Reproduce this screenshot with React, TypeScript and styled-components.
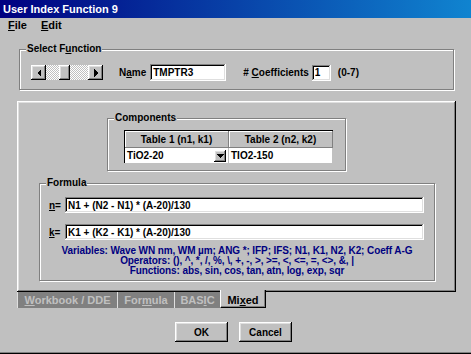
import React from 'react';
import styled, { createGlobalStyle } from 'styled-components';

const GlobalStyle = createGlobalStyle`
  html, body {
    margin: 0;
    padding: 0;
    background: #c0c0c0;
  }
  body {
    font-family: "Liberation Sans", Arial, sans-serif;
  }
`;

const raised = `
  background: #c0c0c0;
  box-shadow: inset -1px -1px #000, inset 1px 1px #fff, inset -2px -2px #808080, inset 2px 2px #dfdfdf;
`;

const sunken = `
  background: #fff;
  box-shadow: inset -1px -1px #fff, inset 1px 1px #808080, inset -2px -2px #dfdfdf, inset 2px 2px #000;
`;

const Window = styled.div`
  width: 471px;
  height: 354px;
  box-sizing: border-box;
  display: flex;
  flex-direction: column;
  background: #c0c0c0;
  border-bottom: 1px solid #000;
  box-shadow: inset 0 -1px #808080;
  overflow: hidden;
  font-family: "Liberation Sans", Arial, sans-serif;
  font-weight: bold;
  font-size: 10px;
  color: #000;
`;

const TitleBar = styled.div`
  height: 18px;
  line-height: 18px;
  padding-left: 3px;
  font-size: 11px;
  color: #fff;
  background: linear-gradient(to right, #000080, #1084d0);
`;

const MenuBar = styled.div`
  display: flex;
  gap: 14px;
  height: 14px;
  line-height: 14px;
  padding-left: 8px;
  font-size: 11px;
`;

const Body = styled.div`
  flex: 1;
  display: flex;
  flex-direction: column;
  align-items: flex-start;
  padding: 0 15px 0 17px;
`;

const GroupBox = styled.div`
  position: relative;
  box-sizing: border-box;
  border: 1px solid #808080;
  box-shadow: inset 1px 1px #fff, 1px 1px #fff;
`;

const Legend = styled.span`
  position: absolute;
  top: -7px;
  left: 6px;
  padding: 0 1px;
  line-height: 12px;
  background: #c0c0c0;
`;

const SelectGroup = styled(GroupBox)`
  width: 435px;
  height: 41px;
  margin: 17px 0 0 2px;
  padding: 14px 0 0 11px;
`;

const Row = styled.div`
  display: flex;
  align-items: center;
  height: 17px;
`;

const ScrollBar = styled.div`
  display: flex;
  width: 72px;
  height: 15px;
  background: repeating-conic-gradient(#fff 0 25%, #c0c0c0 0 50%) 0 0 / 2px 2px;
`;

const ScrollButton = styled.div<{ $end?: boolean }>`
  width: 15px;
  height: 15px;
  display: flex;
  align-items: center;
  justify-content: center;
  margin-left: ${p => (p.$end ? 'auto' : '0')};
  ${raised}
`;

const Thumb = styled.div`
  width: 11px;
  height: 15px;
  margin-left: 13px;
  ${raised}
`;

const Label = styled.span<{ $ml: number }>`
  margin-left: ${p => p.$ml}px;
  white-space: nowrap;
`;

const Field = styled.input<{ $w: number; $h?: number; $ml?: number }>`
  box-sizing: border-box;
  width: ${p => p.$w}px;
  height: ${p => p.$h ?? 17}px;
  margin: 0 0 0 ${p => p.$ml ?? 0}px;
  padding: 0 0 0 3px;
  border: none;
  outline: none;
  font: bold 10px "Liberation Sans", Arial, sans-serif;
  color: #000;
  ${sunken}
`;

const Panel = styled.div`
  box-sizing: border-box;
  width: 439px;
  height: 191px;
  margin-top: 11px;
  display: flex;
  flex-direction: column;
  align-items: flex-start;
  padding-top: 17px;
  background: #c0c0c0;
  box-shadow: inset -1px -1px #000, inset 1px 1px #fff, inset -2px -2px #808080, inset 2px 2px #dfdfdf;
`;

const ComponentsGroup = styled(GroupBox)`
  width: 239px;
  height: 53px;
  margin-left: 90px;
  padding: 11px 0 0 16px;
`;

const Table = styled.div`
  display: grid;
  grid-template-columns: 104px 104px;
  grid-template-rows: 17px 15px;
  width: 208px;
  border-top: 1px solid #000;
  border-left: 1px solid #000;
`;

const HeadCell = styled.div`
  display: flex;
  align-items: center;
  justify-content: center;
  border-right: 1px solid #808080;
  border-bottom: 1px solid #808080;
  box-shadow: inset 1px 1px #fff;
  background: #c0c0c0;
`;

const DataCell = styled.div`
  display: flex;
  align-items: center;
  padding-left: 2px;
  background: #fff;
  border-right: 1px solid #c0c0c0;
`;

const DropButton = styled.div`
  width: 12px;
  height: 12px;
  margin: 0 2px 0 auto;
  display: flex;
  align-items: center;
  justify-content: center;
  ${raised}
`;

const FormulaGroup = styled(GroupBox)`
  width: 396px;
  height: 98px;
  margin: 12px 0 0 22px;
  padding: 13px 0 0 9px;
`;

const FormulaRow = styled.div<{ $mt?: number }>`
  display: flex;
  align-items: center;
  margin-top: ${p => p.$mt ?? 0}px;
`;

const RowLabel = styled.span`
  width: 16px;
`;

const Notes = styled.div`
  margin: 6px 0 0 -9px;
  width: 394px;
  text-align: center;
  line-height: 10px;
  letter-spacing: -0.1px;
  color: #000080;
  white-space: nowrap;
`;

const TabRow = styled.div`
  display: flex;
  align-items: flex-start;
  height: 16px;
`;

const Tab = styled.div<{ $w: number; $active?: boolean }>`
  box-sizing: border-box;
  width: ${p => p.$w}px;
  height: ${p => (p.$active ? 18 : 16)}px;
  margin-top: ${p => (p.$active ? -2 : 0)}px;
  position: relative;
  display: flex;
  align-items: center;
  justify-content: center;
  font-size: 11px;
  border-left: 1px solid ${p => (p.$active ? '#fff' : '#dfdfdf')};
  color: ${p => (p.$active ? '#000' : '#c0c0c0')};
  background: ${p => (p.$active ? '#c0c0c0' : '#808080')};
  ${p =>
    p.$active &&
    `
    border-right: 1px solid #000;
    border-bottom: 1px solid #000;
    box-shadow: inset -1px -1px #808080;
    padding-top: 2px;
  `}
`;

const ButtonRow = styled.div`
  display: flex;
  gap: 11px;
  margin: 14px 0 0 158px;
`;

const Button = styled.button`
  width: 53px;
  height: 20px;
  padding: 0;
  border: none;
  font: bold 10px "Liberation Sans", Arial, sans-serif;
  color: #000;
  ${raised}
`;

const Arrow = ({ dir }: { dir: 'left' | 'right' | 'down' }) => {
  const pts = dir === 'left' ? '4,0 0,4 4,8' : dir === 'right' ? '0,0 4,4 0,8' : '0,0 7,0 3.5,4';
  const w = dir === 'down' ? 7 : 4;
  const h = dir === 'down' ? 4 : 8;
  return (
    <svg width={w} height={h} viewBox={`0 0 ${w} ${h}`} shapeRendering="crispEdges">
      <polygon points={pts} fill="#000" />
    </svg>
  );
};

export default function App() {
  return (
    <>
      <GlobalStyle />
      <Window>
        <TitleBar>User Index Function 9</TitleBar>
        <MenuBar>
          <span><u>F</u>ile</span>
          <span><u>E</u>dit</span>
        </MenuBar>
        <Body>
          <SelectGroup>
            <Legend>Select F<u>u</u>nction</Legend>
            <Row>
              <ScrollBar>
                <ScrollButton><Arrow dir="left" /></ScrollButton>
                <Thumb />
                <ScrollButton $end><Arrow dir="right" /></ScrollButton>
              </ScrollBar>
              <Label $ml={16}>N<u>a</u>me</Label>
              <Field $w={76} $ml={4} readOnly defaultValue="TMPTR3" />
              <Label $ml={17}># <u>C</u>oefficients</Label>
              <Field $w={19} $h={16} $ml={3} readOnly defaultValue="1" />
              <Label $ml={7}>(0-7)</Label>
            </Row>
          </SelectGroup>

          <Panel>
            <ComponentsGroup>
              <Legend>Components</Legend>
              <Table>
                <HeadCell>Table 1 (n1, k1)</HeadCell>
                <HeadCell>Table 2 (n2, k2)</HeadCell>
                <DataCell>
                  TiO2-20
                  <DropButton><Arrow dir="down" /></DropButton>
                </DataCell>
                <DataCell>TIO2-150</DataCell>
              </Table>
            </ComponentsGroup>

            <FormulaGroup>
              <Legend>Formula</Legend>
              <FormulaRow>
                <RowLabel><u>n</u>=</RowLabel>
                <Field $w={359} $h={16} readOnly defaultValue="N1 + (N2 - N1) * (A-20)/130" />
              </FormulaRow>
              <FormulaRow $mt={11}>
                <RowLabel><u>k</u>=</RowLabel>
                <Field $w={359} $h={16} readOnly defaultValue="K1 + (K2 - K1) * (A-20)/130" />
              </FormulaRow>
              <Notes>
                <div>Variables: Wave WN nm, WM µm; ANG *; IFP; IFS; N1, K1, N2, K2; Coeff A-G</div>
                <div>Operators: (), ^, *, /, %, \, +, -, &gt;, &gt;=, &lt;, &lt;=, =, &lt;&gt;, &amp;, |</div>
                <div>Functions: abs, sin, cos, tan, atn, log, exp, sqr</div>
              </Notes>
            </FormulaGroup>
          </Panel>

          <TabRow>
            <Tab $w={100}><span><u>W</u>orkbook / DDE</span></Tab>
            <Tab $w={57}><span>For<u>m</u>ula</span></Tab>
            <Tab $w={46}><span>BAS<u>I</u>C</span></Tab>
            <Tab $w={46} $active><span>Mi<u>x</u>ed</span></Tab>
          </TabRow>

          <ButtonRow>
            <Button>OK</Button>
            <Button>Cancel</Button>
          </ButtonRow>
        </Body>
      </Window>
    </>
  );
}
